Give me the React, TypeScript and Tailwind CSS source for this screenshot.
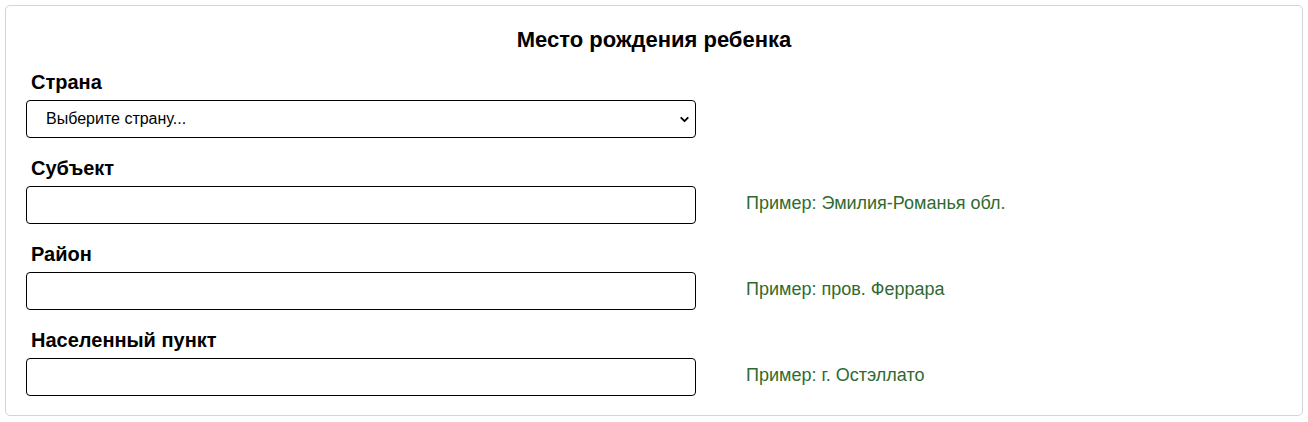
import { ChevronDown } from "lucide-react";

const fields = [
  { label: "Субъект", hint: "Пример: Эмилия-Романья обл." },
  { label: "Район", hint: "Пример: пров. Феррара" },
  { label: "Населенный пункт", hint: "Пример: г. Остэллато" },
];

export default function App() {
  return (
    <div className="bg-white p-[5px] font-['Liberation_Sans',Arial,sans-serif] text-black">
      <section className="rounded-[5px] border border-[#d4d4d4] px-5 pt-5 pb-[19px]">
        <h2 className="text-center text-[22px] leading-[28px] font-bold">
          Место рождения ребенка
        </h2>

        <div className="mt-[17px] flex flex-col gap-[19px]">
          <div className="flex items-end">
            <div className="flex w-[670px] flex-col gap-[7px]">
              <label className="pl-[5px] text-[20px] leading-[22px] font-bold">Страна</label>
              <div className="relative">
                <select className="h-[38px] w-full appearance-none rounded-[4px] border border-black bg-white pl-[19px] text-[16px] text-black outline-none">
                  <option>Выберите страну...</option>
                </select>
                <ChevronDown
                  size={13}
                  strokeWidth={3.5}
                  className="pointer-events-none absolute top-[13px] right-[5px] text-black"
                />
              </div>
            </div>
          </div>

          {fields.map((f) => (
            <div key={f.label} className="flex items-end">
              <div className="flex w-[670px] flex-col gap-[7px]">
                <label className="pl-[5px] text-[20px] leading-[22px] font-bold">{f.label}</label>
                <input
                  type="text"
                  className="h-[38px] w-full rounded-[4px] border border-black bg-white px-3 text-[16px] outline-none"
                />
              </div>
              <div className="ml-[50px] flex h-[38px] items-center pb-[3px] text-[18px] text-[#2f6b2f]">
                {f.hint}
              </div>
            </div>
          ))}
        </div>
      </section>
    </div>
  );
}
